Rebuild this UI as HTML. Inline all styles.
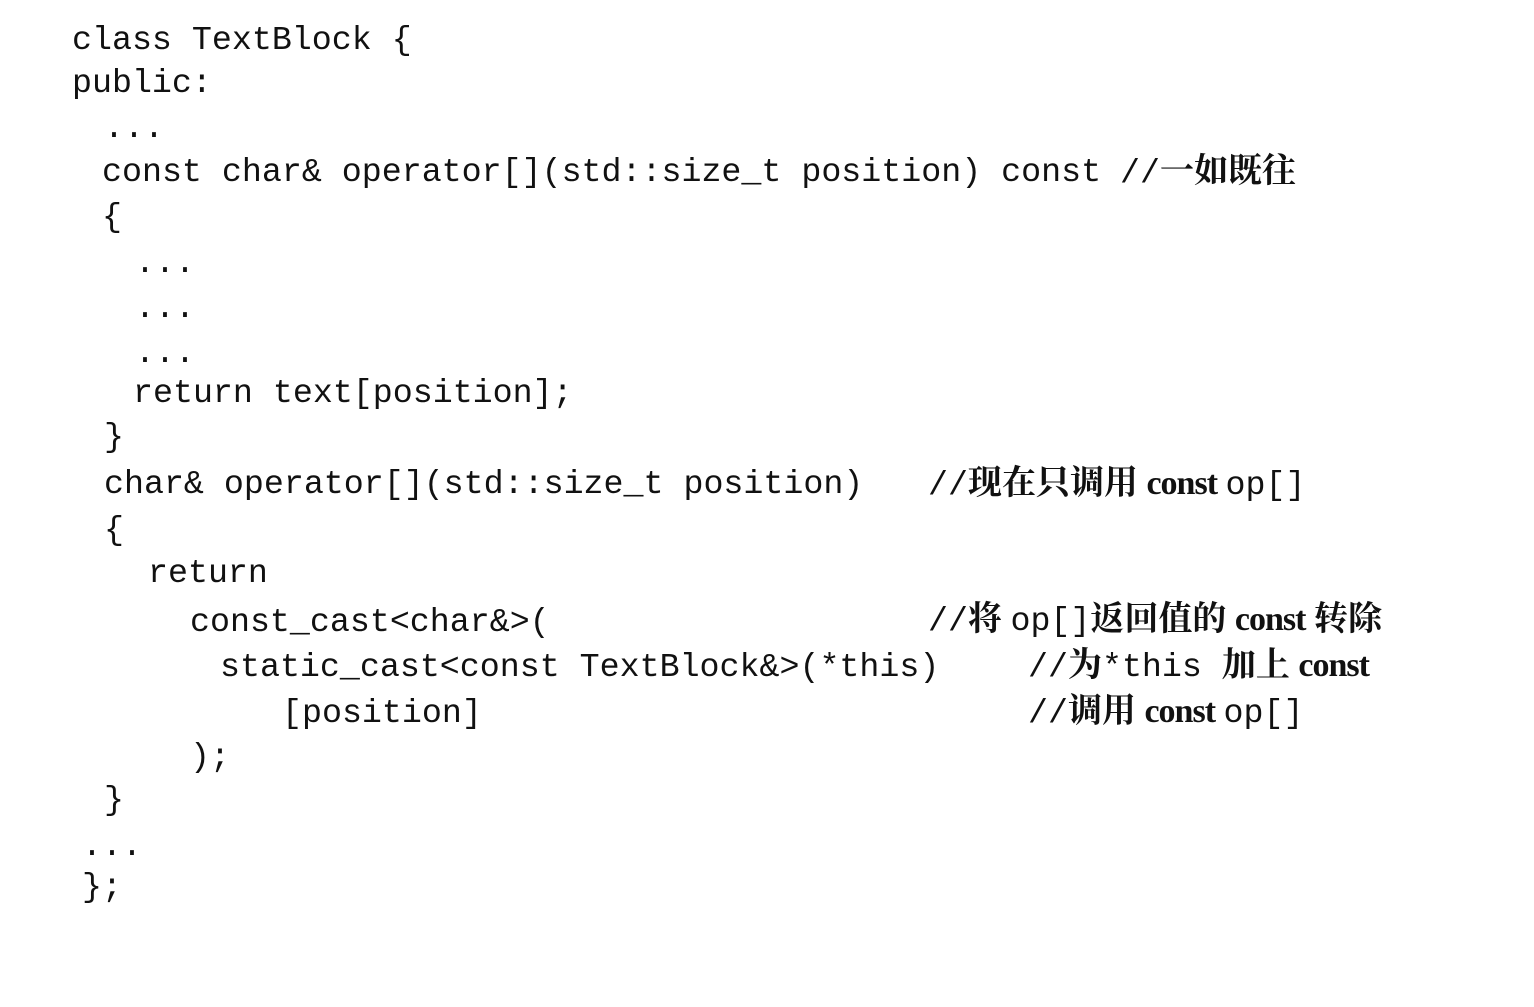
<!DOCTYPE html>
<html><head><meta charset="utf-8">
<style>
html,body{margin:0;padding:0;background:#fff;}
body{width:1534px;height:1007px;position:relative;overflow:hidden;}
.l{position:absolute;white-space:pre;font-family:"Liberation Mono","Noto Sans CJK SC",monospace;font-size:33.3px;line-height:40px;color:#111;}
.s{font-family:"Liberation Serif","Noto Serif CJK SC",serif;font-size:34px;font-weight:bold;}
.c{letter-spacing:-1px;}
</style></head><body>
<div class="l" style="left:72px;top:20px">class TextBlock {</div>
<div class="l" style="left:72px;top:63px">public:</div>
<div class="l" style="left:104px;top:108px">...</div>
<div class="l" style="left:102px;top:152px">const char&amp; operator[](std::size_t position) const</div>
<div class="l" style="left:1120px;top:152px">//<span class="s">一如既往</span></div>
<div class="l" style="left:102px;top:197px">{</div>
<div class="l" style="left:135px;top:243px">...</div>
<div class="l" style="left:135px;top:288px">...</div>
<div class="l" style="left:135px;top:333px">...</div>
<div class="l" style="left:133px;top:373px">return text[position];</div>
<div class="l" style="left:104px;top:417px">}</div>
<div class="l" style="left:104px;top:464px">char&amp; operator[](std::size_t position)</div>
<div class="l" style="left:928px;top:464px">//<span class="s">现在只调用 <span class="c">const</span> </span>op[]</div>
<div class="l" style="left:104px;top:510px">{</div>
<div class="l" style="left:148px;top:553px">return</div>
<div class="l" style="left:190px;top:602px">const_cast&lt;char&amp;&gt;(</div>
<div class="l" style="left:928px;top:600px">//<span class="s">将 </span>op[]<span class="s">返回值的 <span class="c">const</span> 转除</span></div>
<div class="l" style="left:220px;top:647px">static_cast&lt;const TextBlock&amp;&gt;(*this)</div>
<div class="l" style="left:1028px;top:646px">//<span class="s">为</span>*this <span class="s">加上 <span class="c">const</span></span></div>
<div class="l" style="left:282px;top:693px">[position]</div>
<div class="l" style="left:1028px;top:692px">//<span class="s">调用 <span class="c">const</span> </span>op[]</div>
<div class="l" style="left:190px;top:737px">);</div>
<div class="l" style="left:104px;top:780px">}</div>
<div class="l" style="left:82px;top:826px">...</div>
<div class="l" style="left:82px;top:867px">};</div>
</body></html>
